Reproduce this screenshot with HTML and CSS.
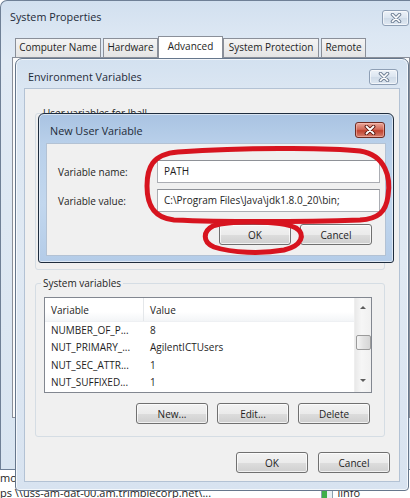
FILE: index.html
```html
<!DOCTYPE html>
<html lang="en">
<head>
    <meta charset="UTF-8">
    <meta name="viewport" content="width=device-width, initial-scale=1.0">
    <title>Environment Variables</title>
    <link rel="stylesheet" href="styles.css">
</head>
<body>
    <!-- explorer window peeking out behind the dialogs -->
    <div class="explorer">
        <div class="explorer-line">mo</div>
        <div class="explorer-line">
            <span>ps \\uss-am-dat-00.am.trimblecorp.net\...</span>
            <span class="explorer-item"><span class="file-icon"></span>linfo</span>
        </div>
    </div>

    <!-- System Properties -->
    <div class="window sysprops">
        <div class="titlebar">
            <span class="title">System Properties</span>
            <span class="close-btn">
                <svg viewBox="0 0 12 10" width="12" height="10"><path d="M2.5 1.5 L9.5 8.5 M9.5 1.5 L2.5 8.5" stroke="#75859a" stroke-width="3.6" stroke-linecap="round"/><path d="M2.5 1.5 L9.5 8.5 M9.5 1.5 L2.5 8.5" stroke="#fff" stroke-width="1.6" stroke-linecap="round"/></svg>
            </span>
        </div>
        <div class="tabs">
            <div class="tab tab-computer">Computer Name</div>
            <div class="tab tab-hardware">Hardware</div>
            <div class="tab tab-active">Advanced</div>
            <div class="tab tab-protection">System Protection</div>
            <div class="tab tab-remote">Remote</div>
        </div>
        <div class="tab-panel"></div>
    </div>

    <!-- Environment Variables -->
    <div class="window envvars">
        <div class="titlebar">
            <span class="title">Environment Variables</span>
            <span class="close-btn">
                <svg viewBox="0 0 12 10" width="12" height="10"><path d="M2.5 1.5 L9.5 8.5 M9.5 1.5 L2.5 8.5" stroke="#75859a" stroke-width="3.6" stroke-linecap="round"/><path d="M2.5 1.5 L9.5 8.5 M9.5 1.5 L2.5 8.5" stroke="#fff" stroke-width="1.6" stroke-linecap="round"/></svg>
            </span>
        </div>
        <div class="client">
            <fieldset class="group group-user">
                <legend>User variables for lhall</legend>
            </fieldset>

            <fieldset class="group group-system">
                <legend>System variables</legend>
                <div class="listview">
                    <div class="list-main">
                        <div class="list-header">
                            <div class="col col-name">Variable</div>
                            <div class="col col-value">Value</div>
                        </div>
                        <div class="list-row">
                            <div class="col col-name">NUMBER_OF_P...</div>
                            <div class="col col-value">8</div>
                        </div>
                        <div class="list-row">
                            <div class="col col-name">NUT_PRIMARY_...</div>
                            <div class="col col-value">AgilentICTUsers</div>
                        </div>
                        <div class="list-row">
                            <div class="col col-name">NUT_SEC_ATTR...</div>
                            <div class="col col-value">1</div>
                        </div>
                        <div class="list-row">
                            <div class="col col-name">NUT_SUFFIXED...</div>
                            <div class="col col-value">1</div>
                        </div>
                    </div>
                    <div class="scrollbar">
                        <span class="arrow arrow-up"></span>
                        <span class="thumb"></span>
                        <span class="arrow arrow-down"></span>
                    </div>
                </div>
                <div class="button-row group-buttons">
                    <button class="btn">New...</button>
                    <button class="btn">Edit...</button>
                    <button class="btn">Delete</button>
                </div>
            </fieldset>

            <div class="button-row dialog-buttons">
                <button class="btn">OK</button>
                <button class="btn">Cancel</button>
            </div>
        </div>
    </div>

    <!-- New User Variable -->
    <div class="window newvar">
        <div class="titlebar">
            <span class="title">New User Variable</span>
            <span class="close-btn close-red">
                <svg viewBox="0 0 12 10" width="12" height="10"><path d="M2.5 1.5 L9.5 8.5 M9.5 1.5 L2.5 8.5" stroke="#5b1a12" stroke-width="3.8" stroke-linecap="round"/><path d="M2.5 1.5 L9.5 8.5 M9.5 1.5 L2.5 8.5" stroke="#fff" stroke-width="1.8" stroke-linecap="round"/></svg>
            </span>
        </div>
        <div class="client newvar-client">
            <div class="field-row">
                <label class="field-label">Variable name:</label>
                <div class="textbox">PATH</div>
            </div>
            <div class="field-row">
                <label class="field-label">Variable value:</label>
                <div class="textbox">C:\Program Files\Java\jdk1.8.0_20\bin;</div>
            </div>
            <div class="button-row newvar-buttons">
                <button class="btn">OK</button>
                <button class="btn">Cancel</button>
            </div>
        </div>
    </div>

    <!-- hand drawn red marks -->
    <svg class="marks" viewBox="0 0 410 498" width="410" height="498">
        <path d="M178 152 C240 148 325 147 360 151 C386 155 391 178 388 196 C386 212 378 219 360 220 C300 222 220 222 174 220 C153 218 147 204 147 186 C147 168 152 154 178 152 Z" fill="none" stroke="#d7141f" stroke-width="5"/>
        <path d="M213 226 C228 221 280 220 296 228 C306 234 302 246 284 250 C262 254 232 253 214 247 C202 242 203 231 213 226 Z" fill="none" stroke="#d7141f" stroke-width="5"/>
    </svg>
</body>
</html>
```

FILE: styles.css
```css
* {
    box-sizing: border-box;
}

body {
    margin: 0;
    width: 410px;
    height: 498px;
    overflow: hidden;
    position: relative;
    background: #ffffff;
    font-family: "Open Sans", "Noto Sans", sans-serif;
    font-size: 10px;
    color: #1e1e1e;
}

/* ---------- explorer behind ---------- */

.explorer {
    position: absolute;
    left: 0;
    top: 470px;
    width: 410px;
    height: 28px;
    padding-top: 1px;
    background: #ffffff;
    overflow: hidden;
}

.explorer-line {
    display: flex;
    height: 14px;
    line-height: 14px;
    font-size: 11px;
    white-space: nowrap;
}

.explorer-line + .explorer-line {
    margin-top: 1px;
}

.explorer-item {
    display: flex;
    align-items: center;
    gap: 4px;
    margin-left: auto;
    margin-right: 50px;
}

.file-icon {
    width: 12px;
    height: 12px;
    border: 1px solid #8aa0b0;
    background: linear-gradient(90deg, #3fae49 0 5px, #e8eef2 5px);
}

/* ---------- windows ---------- */

.window {
    position: absolute;
    display: flex;
    flex-direction: column;
}

.titlebar {
    display: flex;
    align-items: flex-start;
    flex-shrink: 0;
}

.title {
    font-size: 10.8px;
    line-height: 16px;
    color: #1e2a38;
}

.close-btn {
    margin-left: auto;
    width: 29px;
    height: 16px;
    display: flex;
    align-items: center;
    justify-content: center;
    border: 1px solid #8e9fb5;
    border-radius: 3px;
    background: linear-gradient(#edf2f8, #dbe5f0 50%, #cfdbe8 51%, #dfe8f2);
    box-shadow: inset 0 0 0 1px rgba(255, 255, 255, 0.6);
}

.close-red {
    border-color: #6e2b22;
    background: linear-gradient(#e9a89b, #d26a59 45%, #c0412e 55%, #d5806f);
    box-shadow: inset 0 0 0 1px rgba(255, 200, 190, 0.5);
}

.client {
    flex: 1;
    display: flex;
    flex-direction: column;
    background: #f0f0f0;
    border: 1px solid #b3c2d4;
}

/* System Properties */

.sysprops {
    left: 0;
    top: 0;
    width: 410px;
    height: 470px;
    border: 1px solid #6f8096;
    border-right: none;
    border-radius: 7px 0 0 0;
    background: linear-gradient(#d2e0ef, #dce7f3 34px, #e1eaf4 60px, #d9e5f1);
}

.sysprops .titlebar {
    height: 34px;
    padding: 8px 1px 0 9px;
}

.sysprops .close-btn {
    margin-top: 1px;
    width: 27px;
}

.tabs {
    display: flex;
    align-items: flex-end;
    height: 22px;
    padding-left: 14px;
}

.tab {
    height: 19px;
    line-height: 17px;
    margin-right: 2px;
    text-align: center;
    border: 1px solid #8a8f99;
    border-bottom: none;
    background: linear-gradient(#f4f4f4, #e4e4e4);
    color: #1e1e1e;
    white-space: nowrap;
}

.tab-computer {
    width: 86px;
}

.tab-hardware {
    width: 55px;
}

.tab-protection {
    width: 96px;
}

.tab-remote {
    width: 45px;
}

.tab-active {
    width: 65px;
    height: 22px;
    line-height: 19px;
    margin: 0 0 -1px -2px;
    background: #ffffff;
    position: relative;
}

.tab-panel {
    margin-left: 11px;
    height: 361px;
    background: #fbfbfb;
    border: 1px solid #8a8f99;
}

/* Environment Variables */

.envvars {
    left: 15px;
    top: 58px;
    width: 394px;
    height: 433px;
    padding: 0 8px 8px 8px;
    border: 1px solid #66778c;
    border-radius: 7px 7px 4px 4px;
    background: linear-gradient(#d3e1f0, #dbe6f2 30px, #e0e9f3 200px, #d8e3f0);
    box-shadow: inset 0 0 0 1px rgba(255, 255, 255, 0.7);
}

.envvars .titlebar {
    height: 29px;
    padding: 10px 2px 0 4px;
}

.envvars .client {
    padding: 0 9px 0 10px;
}

.group {
    margin: 0;
    padding: 0 12px 0 8px;
    min-width: 0;
    border: 1px solid #d5dde4;
    border-radius: 3px;
}

.group legend {
    margin-left: -3px;
    padding: 0 2px;
    font-size: 10px;
    line-height: 14px;
    color: #1e1e1e;
}

.group-user {
    margin: 17px 5px 0 0;
    height: 164px;
}

.group-system {
    margin: 6px 5px 0 0;
    height: 161px;
    padding-top: 7px;
}

/* list view */

.listview {
    display: flex;
    height: 96px;
    background: #ffffff;
    border: 1px solid #828790;
}

.list-main {
    flex: 1;
}

.list-header {
    display: flex;
    height: 24px;
    line-height: 24px;
    background: linear-gradient(#ffffff, #ffffff 60%, #f3f5f7);
    border-bottom: 1px solid #eef0f3;
}

.list-header .col-name {
    border-right: 1px solid #e4e7ea;
}

.list-row {
    display: flex;
    height: 17.3px;
    line-height: 17.3px;
}

.col {
    padding-left: 6px;
    white-space: nowrap;
    overflow: hidden;
}

.col-name {
    width: 99px;
}

.col-value {
    flex: 1;
}

.scrollbar {
    width: 17px;
    display: flex;
    flex-direction: column;
    align-items: center;
    background: linear-gradient(90deg, #e9e9e9, #f6f6f6 40%, #f0f0f0);
    border-left: 1px solid #eeeeee;
}

.arrow {
    width: 0;
    height: 0;
    border-left: 3px solid transparent;
    border-right: 3px solid transparent;
}

.arrow-up {
    margin-top: 8px;
    border-bottom: 3px solid #5d5d5d;
}

.arrow-down {
    margin-top: auto;
    margin-bottom: 10px;
    border-top: 3px solid #5d5d5d;
}

.thumb {
    margin-top: 26px;
    width: 15px;
    height: 15px;
    border: 1px solid #9b9b9b;
    border-radius: 2px;
    background: linear-gradient(90deg, #f5f5f5, #e2e2e2 50%, #d6d6d6);
}

/* buttons */

.button-row {
    display: flex;
    justify-content: flex-end;
    gap: 9px;
}

.btn {
    width: 72px;
    height: 21px;
    padding: 0;
    font-family: inherit;
    font-size: 10px;
    color: #1e1e1e;
    border: 1px solid #707070;
    border-radius: 3px;
    background: linear-gradient(#f2f2f2, #ebebeb 50%, #dddddd 51%, #cfcfcf);
    box-shadow: inset 0 0 0 1px rgba(255, 255, 255, 0.7);
}

.group-buttons {
    margin-top: 10px;
    padding-right: 2px;
}

.dialog-buttons {
    margin-top: auto;
    margin-bottom: 8px;
    gap: 10px;
}

/* New User Variable */

.newvar {
    left: 38px;
    top: 113px;
    width: 356px;
    height: 150px;
    padding: 0 7px 6px 7px;
    border: 1px solid #1f2d3e;
    border-radius: 6px 6px 3px 3px;
    background: linear-gradient(#a9c3e2, #b9d0ea 30px, #c2d7ee 90px, #b4cce8);
    box-shadow: inset 0 0 0 1px rgba(255, 255, 255, 0.55);
}

.newvar .titlebar {
    height: 29px;
    padding: 8px 1px 0 4px;
}

.newvar .title {
    padding-top: 1px;
}

.newvar .close-btn {
    width: 30px;
}

.newvar-client {
    padding: 16px 5px 0 11px;
    gap: 6px;
}

.field-row {
    display: flex;
    align-items: center;
    height: 23px;
}

.field-label {
    width: 99px;
}

.textbox {
    flex: 1;
    height: 23px;
    line-height: 21px;
    padding-left: 6px;
    background: #ffffff;
    border: 1px solid #abadb3;
    border-top-color: #8e9197;
    white-space: nowrap;
}

.newvar-buttons {
    margin-top: 6px;
    padding-right: 8px;
}

/* annotation */

.marks {
    position: absolute;
    left: 0;
    top: 0;
    pointer-events: none;
}
```
